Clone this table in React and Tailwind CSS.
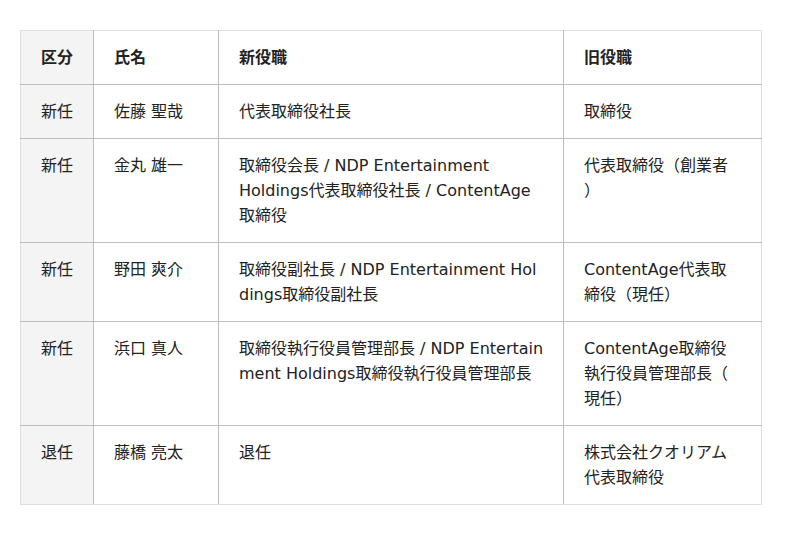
const rows = [
  { kind: '新任', name: '佐藤 聖哉', next: '代表取締役社長', prev: '取締役' },
  { kind: '新任', name: '金丸 雄一', next: '取締役会長 / NDP Entertainment Holdings代表取締役社長 / ContentAge取締役', prev: '代表取締役（創業者）', soft: true },
  { kind: '新任', name: '野田 爽介', next: '取締役副社長 / NDP Entertainment Holdings取締役副社長', prev: 'ContentAge代表取締役（現任）' },
  { kind: '新任', name: '浜口 真人', next: '取締役執行役員管理部長 / NDP Entertainment Holdings取締役執行役員管理部長', prev: 'ContentAge取締役執行役員管理部長（現任）' },
  { kind: '退任', name: '藤橋 亮太', next: '退任', prev: '株式会社クオリアム代表取締役' },
];

const base = 'pl-5 py-[14px] align-top text-left [text-spacing-trim:space-all]';
const anywhere = '[word-break:break-all] [line-break:anywhere]';

export default function App() {
  const last = rows.length - 1;
  return (
    <div
      className="bg-white px-5 pt-[30px] pb-[30px] text-[16px] leading-[25px] text-[#222]"
      style={{ fontFamily: '"DejaVu Sans", "Noto Sans CJK JP", sans-serif' }}
    >
      <table className="w-[742px] table-fixed border-collapse">
        <colgroup>
          <col className="w-[73px]" />
          <col className="w-[125px]" />
          <col className="w-[345px]" />
          <col />
        </colgroup>
        <thead>
          <tr>
            <th className={`${base} pr-5 border-t border-l border-b border-r border-t-[#e0e0e0] border-l-[#e0e0e0] border-b-[#bdbdbd] border-r-[#bdbdbd] bg-[#f4f4f4] font-bold`}>区分</th>
            <th className={`${base} pr-5 border-t border-b border-r border-t-[#e0e0e0] border-b-[#bdbdbd] border-r-[#bdbdbd] font-bold`}>氏名</th>
            <th className={`${base} pr-[18px] border-t border-b border-r border-t-[#e0e0e0] border-b-[#bdbdbd] border-r-[#bdbdbd] font-bold`}>新役職</th>
            <th className={`${base} pr-5 border-t border-b border-r border-t-[#e0e0e0] border-b-[#bdbdbd] border-r-[#e0e0e0] font-bold`}>旧役職</th>
          </tr>
        </thead>
        <tbody>
          {rows.map((r, i) => {
            const b = i === last ? 'border-b border-b-[#e0e0e0]' : 'border-b border-b-[#bdbdbd]';
            return (
              <tr key={i}>
                <td className={`${base} pr-5 ${b} border-l border-l-[#e0e0e0] border-r border-r-[#bdbdbd] bg-[#f4f4f4]`}>{r.kind}</td>
                <td className={`${base} pr-5 ${b} border-r border-r-[#bdbdbd]`}>{r.name}</td>
                <td className={`${base} pr-[18px] ${b} border-r border-r-[#bdbdbd] ${r.soft ? '' : anywhere}`}>{r.next}</td>
                <td className={`${base} pr-5 ${b} border-r border-r-[#e0e0e0] ${anywhere}`}>{r.prev}</td>
              </tr>
            );
          })}
        </tbody>
      </table>
    </div>
  );
}
